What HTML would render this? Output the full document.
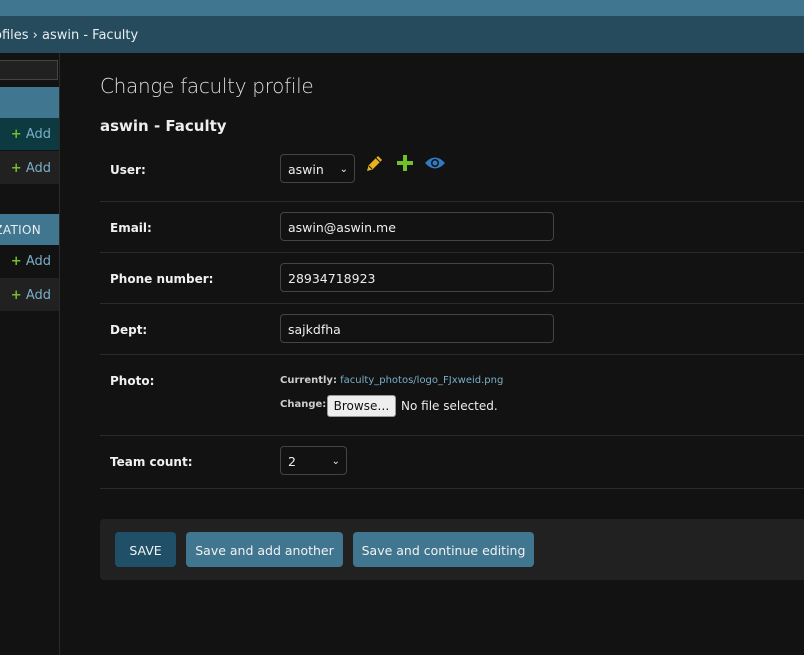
<!DOCTYPE html><html><head><style>
body{margin:0;width:804px;height:655px;background:#121212;font-family:"DejaVu Sans","Liberation Sans",sans-serif;color:#eee;position:relative;overflow:hidden;font-size:12.5px}
.a{position:absolute}
.hdr{left:0;top:0;width:804px;height:16px;background:#417690}
.bc{left:0;top:16px;width:804px;height:37px;background:#264b5d;color:#e6eef2;font-size:13px;line-height:40px;white-space:nowrap;text-indent:-6px}
.side{left:0;top:53px;width:59px;height:602px;border-right:1px solid #2a2a2a}
.cap{background:#417690;color:#e8eef2;font-size:12px;letter-spacing:.3px}
.row{color:#79aec8;font-size:13px}
.plus{color:#70bf2b;font-weight:bold}
.lbl{left:110px;font-weight:bold;font-size:12px;color:#f0f0f0}
.inp{left:280px;width:274px;height:29px;border:1px solid #444;border-radius:4px;background:#121212;box-sizing:border-box;padding-left:7px;line-height:30px;font-size:12.5px}
.hr{left:100px;width:704px;height:1px;background:#2a2a2a}
.btn{top:532px;height:35px;border-radius:4px;background:#417690;color:#f2f2f2;line-height:37px;text-align:center;font-size:12.5px}
</style></head><body>
<div class="a hdr"></div>
<div class="a bc">ofiles › aswin - Faculty</div>
<div class="a side"></div>
<div class="a" style="left:0;top:60px;width:58px;height:20px;background:#212121;border:1px solid #444;border-left:none;box-sizing:border-box"></div>
<div class="a cap" style="left:0;top:87px;width:59px;height:31px"></div>
<div class="a row" style="left:0;top:118px;width:59px;height:32px;background:#0d3a40;line-height:34px;text-align:right;box-sizing:border-box;padding-right:8px"><span class="plus">+</span> Add</div>
<div class="a row" style="left:0;top:151px;width:59px;height:33px;background:#212121;line-height:35px;text-align:right;box-sizing:border-box;padding-right:8px"><span class="plus">+</span> Add</div>
<div class="a cap" style="left:0;top:214px;width:59px;height:31px;line-height:32px;text-align:right;padding-right:18px;box-sizing:border-box;overflow:hidden;white-space:nowrap;direction:rtl">ZATION</div>
<div class="a row" style="left:0;top:245px;width:59px;height:32px;line-height:34px;text-align:right;box-sizing:border-box;padding-right:8px"><span class="plus">+</span> Add</div>
<div class="a row" style="left:0;top:278px;width:59px;height:33px;background:#212121;line-height:35px;text-align:right;box-sizing:border-box;padding-right:8px"><span class="plus">+</span> Add</div>

<div class="a" style="left:100px;top:74px;font-size:20px;font-weight:300;color:#ddd;letter-spacing:-.3px">Change faculty profile</div>
<div class="a" style="left:100px;top:117px;font-size:15px;font-weight:bold">aswin - Faculty</div>

<div class="a lbl" style="top:163px">User:</div>
<div class="a inp" style="top:154px;width:75px">aswin<span style="position:absolute;right:6px;font-size:10px">⌄</span></div>
<svg class="a" style="left:365px;top:153px" width="20" height="20" viewBox="0 0 20 20"><path d="M2 18l1.5-5.5L13 3l4 4-9.5 9.5z" fill="#e8b21c"/><path d="M4 13l3 3M11 5l4 4" stroke="#121212" stroke-width="1"/></svg>
<div class="a" style="left:397px;top:155px;width:16px;height:16px"><div class="a" style="left:6px;top:0;width:4px;height:16px;background:#70bf2b"></div><div class="a" style="left:0;top:6px;width:16px;height:4px;background:#70bf2b"></div></div>
<svg class="a" style="left:424px;top:155px" width="22" height="16" viewBox="0 0 22 16"><path d="M1 8Q11-3 21 8Q11 19 1 8z" fill="#2f7bc3"/><circle cx="11" cy="8" r="4" fill="#121212"/><circle cx="11" cy="8" r="2.5" fill="#2f7bc3"/></svg>
<div class="a hr" style="top:201px"></div>

<div class="a lbl" style="top:221px">Email:</div>
<div class="a inp" style="top:212px">aswin@aswin.me</div>
<div class="a hr" style="top:252px"></div>
<div class="a lbl" style="top:272px">Phone number:</div>
<div class="a inp" style="top:263px">28934718923</div>
<div class="a hr" style="top:303px"></div>
<div class="a lbl" style="top:323px">Dept:</div>
<div class="a inp" style="top:314px">sajkdfha</div>
<div class="a hr" style="top:354px"></div>
<div class="a lbl" style="top:374px">Photo:</div>
<div class="a" style="left:280px;top:375px;font-size:10px"><b style="color:#ccc">Currently:</b> <span style="color:#79aec8">faculty_photos/logo_FJxweid.png</span></div>
<div class="a" style="left:280px;top:399px;font-size:10px;font-weight:bold;color:#ccc">Change:</div>
<div class="a" style="left:327px;top:395px;width:69px;height:22px;background:#eee;border:1px solid #999;border-radius:3px;box-sizing:border-box;color:#111;font-size:12px;line-height:21px;text-align:center">Browse…</div>
<div class="a" style="left:401px;top:399px;font-size:12px">No file selected.</div>
<div class="a hr" style="top:435px"></div>
<div class="a lbl" style="top:455px">Team count:</div>
<div class="a inp" style="top:446px;width:67px">2<span style="position:absolute;right:6px;font-size:10px">⌄</span></div>
<div class="a hr" style="top:488px"></div>

<div class="a" style="left:100px;top:519px;width:704px;height:61px;background:#212121;border-radius:4px 0 0 4px"></div>
<div class="a btn" style="left:115px;width:61px;background:#205067">SAVE</div>
<div class="a btn" style="left:186px;width:157px">Save and add another</div>
<div class="a btn" style="left:353px;width:181px">Save and continue editing</div>
</body></html>
